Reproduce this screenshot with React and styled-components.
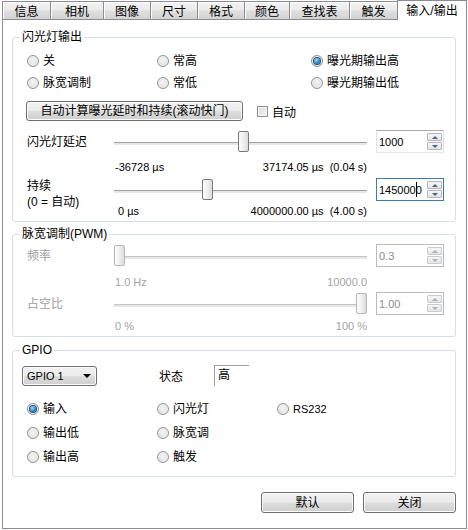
import React from "react";
import styled, { createGlobalStyle } from "styled-components";

const GlobalStyle = createGlobalStyle`
  html, body {
    margin: 0;
    padding: 0;
    background: #fff;
  }
  body {
    font-family: "Liberation Sans", "Noto Sans CJK SC", sans-serif;
    font-size: 12px;
    color: #000;
  }
`;

const tabs = [
  { label: "信息", w: 49 },
  { label: "相机", w: 54 },
  { label: "图像", w: 48 },
  { label: "尺寸", w: 48 },
  { label: "格式", w: 48 },
  { label: "颜色", w: 46 },
  { label: "查找表", w: 61 },
  { label: "触发", w: 49 },
  { label: "输入/输出", w: 70, active: true },
];

const Window = styled.div`
  width: 468px;
  height: 530px;
  padding-left: 2px;
  box-sizing: border-box;
  background: #fff;
`;

const TabStrip = styled.div`
  display: flex;
  align-items: flex-end;
  height: 20px;
  position: relative;
  z-index: 1;
`;

const Tab = styled.div`
  width: ${(p) => p.$w}px;
  height: ${(p) => (p.$active ? 20 : 19)}px;
  margin-left: ${(p) => (p.$first ? 0 : -1)}px;
  box-sizing: border-box;
  border: 1px solid #898c95;
  border-bottom: ${(p) => (p.$active ? "none" : "1px solid #898c95")};
  background: ${(p) =>
    p.$active
      ? "#fff"
      : "linear-gradient(#f3f3f3 0%, #ebebeb 45%, #dedede 55%, #d3d3d3 100%)"};
  box-shadow: ${(p) => (p.$active ? "none" : "inset 1px 1px 0 #fcfcfc")};
  display: flex;
  justify-content: center;
  align-items: center;
  padding-top: ${(p) => (p.$active ? 0 : 3)}px;
  font-size: 12px;
  line-height: 14px;
`;

const Panel = styled.div`
  width: 465px;
  height: 510px;
  margin-top: -1px;
  box-sizing: border-box;
  border: 1px solid #898c95;
  background: #fff;
  display: flex;
  flex-direction: column;
`;

const Group = styled.fieldset`
  margin: ${(p) => p.$top}px 0 0 9px;
  padding: 0;
  width: 444px;
  min-width: 0;
  box-sizing: border-box;
  border: 1px solid #d5dfe5;
  border-radius: 3px;
`;

const Legend = styled.legend`
  margin-left: 7px;
  padding: 0 2px;
  line-height: 14px;
  font-size: 12px;
`;

const GroupBody = styled.div`
  padding: ${(p) => p.$pad};
`;

const RadioGrid = styled.div`
  display: grid;
  grid-template-columns: ${(p) => p.$cols};
  grid-auto-rows: ${(p) => p.$row}px;
  align-items: center;
  padding-left: 14px;
  margin-top: ${(p) => p.$top || 0}px;
`;

const Choice = styled.label`
  display: flex;
  align-items: center;
  gap: 4px;
  line-height: 14px;
`;

const RadioDot = styled.span`
  width: 12px;
  height: 12px;
  box-sizing: border-box;
  border-radius: 50%;
  border: 1px solid #8f9090;
  background: radial-gradient(circle at 50% 45%, #f6f6f6 0%, #e4e4e4 55%, #cfcfcf 100%);
  box-shadow: inset 0 0 0 1px #f4f4f4;
  display: flex;
  align-items: center;
  justify-content: center;
  &::after {
    content: "";
    display: ${(p) => (p.$checked ? "block" : "none")};
    width: 6px;
    height: 6px;
    border-radius: 50%;
    background: radial-gradient(circle at 40% 35%, #9fdcff 0%, #2b86c8 55%, #16496f 100%);
    box-shadow: 0 0 0 1px #1e4f74;
  }
`;

const Radio = ({ checked, children }) => (
  <Choice>
    <RadioDot $checked={checked} />
    <span>{children}</span>
  </Choice>
);

const ActionRow = styled.div`
  display: flex;
  align-items: center;
  margin-top: 7px;
  padding-left: 13px;
`;

const Button = styled.button`
  width: ${(p) => p.$w}px;
  height: ${(p) => p.$h || 21}px;
  box-sizing: border-box;
  border: 1px solid #707070;
  border-radius: 3px;
  background: linear-gradient(#f2f2f2 0%, #ebebeb 48%, #dddddd 52%, #cfcfcf 100%);
  box-shadow: inset 0 0 0 1px #fbfbfb;
  font-family: inherit;
  font-size: 12px;
  color: #000;
  padding: 0;
  line-height: 14px;
`;

const CheckBox = styled.span`
  width: 11px;
  height: 11px;
  box-sizing: border-box;
  border: 1px solid #8f8f8f;
  background: linear-gradient(135deg, #dcdcdc, #f4f4f4);
  box-shadow: inset 0 0 0 1px #f6f6f6;
`;

const CheckLabel = styled.label`
  display: flex;
  align-items: center;
  gap: 4px;
  margin-left: 14px;
`;

const SliderRow = styled.div`
  display: grid;
  grid-template-columns: 78px 253px 68px;
  column-gap: 9px;
  height: 23px;
  padding-left: 14px;
  margin-top: ${(p) => p.$top}px;
`;

const RowLabel = styled.div`
  align-self: ${(p) => (p.$multi ? "start" : "center")};
  line-height: 16px;
  color: ${(p) => (p.$disabled ? "#a0a0a0" : "#000")};
  white-space: nowrap;
`;

const Track = styled.div`
  position: relative;
  height: 23px;
  &::before {
    content: "";
    position: absolute;
    left: 0;
    right: 0;
    top: 12px;
    height: 1px;
    background: ${(p) => (p.$disabled ? "#c4c4c4" : "#a0a0a0")};
    border-bottom: 2px solid #e4e8e9;
  }
`;

const Thumb = styled.div`
  position: absolute;
  top: 1px;
  width: 11px;
  height: 21px;
  box-sizing: border-box;
  border: 1px solid ${(p) => (p.$disabled ? "#b4b7ba" : "#7a7a7a")};
  border-radius: 2px;
  background: linear-gradient(to right, #fdfdfd, #efefef 50%, #dcdcdc);
`;

const Slider = ({ pos, disabled }) => (
  <Track $disabled={disabled}>
    <Thumb $disabled={disabled} style={{ left: pos }} />
  </Track>
);

const SpinWrap = styled.div`
  width: 68px;
  height: 23px;
  box-sizing: border-box;
  border: 1px solid;
  border-color: ${(p) =>
    p.$focus ? "#3d7bad" : p.$disabled ? "#b8bcc0" : "#abadb3 #dbdfe6 #e3e9ef #e2e3ea"};
  background: #fff;
  display: flex;
  align-items: center;
  padding-left: 2px;
  font-size: 12px;
  color: ${(p) => (p.$disabled ? "#8d8d8d" : "#000")};
`;

const SpinText = styled.span`
  display: flex;
  align-items: center;
  line-height: 14px;
`;

const Caret = styled.span`
  display: inline-block;
  width: 1px;
  height: 15px;
  background: #000;
  margin-right: -1px;
`;

const SpinButtons = styled.div`
  margin-left: auto;
  margin-right: 1px;
  align-self: flex-start;
  margin-top: 2px;
  display: flex;
  flex-direction: column;
  gap: 1px;
`;

const SpinButton = styled.div`
  width: 15px;
  height: 8px;
  box-sizing: border-box;
  border: 1px solid ${(p) => (p.$disabled ? "#c9cbcd" : "#b3b6bb")};
  border-radius: 1px;
  background: linear-gradient(#f6f6f6, #e5e5e5);
  display: flex;
  align-items: center;
  justify-content: center;
  &::after {
    content: "";
    border-left: 3px solid transparent;
    border-right: 3px solid transparent;
    ${(p) => (p.$down ? "border-top" : "border-bottom")}: 3px solid
      ${(p) => (p.$disabled ? "#a6aeb8" : "#4d6185")};
  }
`;

const Spin = ({ children, focus, disabled }) => (
  <SpinWrap $focus={focus} $disabled={disabled}>
    <SpinText>{children}</SpinText>
    <SpinButtons>
      <SpinButton $disabled={disabled} />
      <SpinButton $down $disabled={disabled} />
    </SpinButtons>
  </SpinWrap>
);

const ScaleRow = styled.div`
  display: flex;
  justify-content: space-between;
  width: 252px;
  margin-left: 102px;
  margin-top: ${(p) => p.$top}px;
  height: 14px;
  line-height: 14px;
  font-size: 11px;
  color: ${(p) => (p.$disabled ? "#a3a3a3" : "#000")};
  white-space: pre;
`;

const GpioTop = styled.div`
  display: flex;
  align-items: center;
  margin-top: 8px;
  padding-left: 9px;
`;

const Dropdown = styled.div`
  width: 75px;
  height: 20px;
  box-sizing: border-box;
  border: 1px solid #707070;
  border-radius: 3px;
  background: linear-gradient(#f2f2f2 0%, #ebebeb 48%, #dddddd 52%, #cfcfcf 100%);
  box-shadow: inset 0 0 0 1px #fbfbfb;
  display: flex;
  align-items: center;
  justify-content: space-between;
  padding: 0 5px 0 4px;
  font-size: 11px;
  &::after {
    content: "";
    border-left: 4px solid transparent;
    border-right: 4px solid transparent;
    border-top: 4px solid #000;
  }
`;

const StateLabel = styled.span`
  margin-left: 62px;
`;

const StateValue = styled.div`
  width: 35px;
  height: 21px;
  margin-left: 31px;
  box-sizing: border-box;
  border-top: 1px solid #a0a0a0;
  border-left: 1px solid #a0a0a0;
  padding: 2px 0 0 3px;
  line-height: 14px;
`;

const Footer = styled.div`
  display: flex;
  justify-content: flex-end;
  gap: 9px;
  width: 444px;
  margin: 15px 0 0 9px;
`;

const Latin = styled.span`
  font-size: 11px;
`;

export default function App() {
  return (
    <>
      <GlobalStyle />
      <Window>
        <TabStrip>
          {tabs.map((t, i) => (
            <Tab key={t.label} $w={t.w} $active={t.active} $first={i === 0}>
              {t.label}
            </Tab>
          ))}
        </TabStrip>
        <Panel>
          <Group $top={10}>
            <Legend>闪光灯输出</Legend>
            <GroupBody $pad="6px 0 3px 0">
              <RadioGrid $cols="130px 154px 1fr" $row={22}>
                <Radio>关</Radio>
                <Radio>常高</Radio>
                <Radio checked>曝光期输出高</Radio>
                <Radio>脉宽调制</Radio>
                <Radio>常低</Radio>
                <Radio>曝光期输出低</Radio>
              </RadioGrid>
              <ActionRow>
                <Button $w={217} $h={20}>
                  自动计算曝光延时和持续(滚动快门)
                </Button>
                <CheckLabel>
                  <CheckBox />
                  <span>自动</span>
                </CheckLabel>
              </ActionRow>
              <SliderRow $top={9}>
                <RowLabel>闪光灯延迟</RowLabel>
                <Slider pos={124} />
                <Spin>
                  <Latin>1000</Latin>
                </Spin>
              </SliderRow>
              <ScaleRow $top={7}>
                <span>-36728 µs</span>
                <span>37174.05 µs  (0.04 s)</span>
              </ScaleRow>
              <SliderRow $top={4}>
                <RowLabel $multi>
                  持续
                  <br />
                  (0 = 自动)
                </RowLabel>
                <Slider pos={88} />
                <Spin focus>
                  <Latin>145000</Latin>
                  <Caret />
                  <Latin>0</Latin>
                </Spin>
              </SliderRow>
              <ScaleRow $top={3}>
                <span> 0 µs</span>
                <span>4000000.00 µs  (4.00 s)</span>
              </ScaleRow>
            </GroupBody>
          </Group>

          <Group $top={5}>
            <Legend>脉宽调制(PWM)</Legend>
            <GroupBody $pad="3px 0 3px 0">
              <SliderRow $top={0}>
                <RowLabel $disabled>频率</RowLabel>
                <Slider pos={0} disabled />
                <Spin disabled>
                  <Latin>0.3</Latin>
                </Spin>
              </SliderRow>
              <ScaleRow $top={8} $disabled>
                <span>1.0 Hz</span>
                <span>10000.0</span>
              </ScaleRow>
              <SliderRow $top={3}>
                <RowLabel $disabled>占空比</RowLabel>
                <Slider pos={242} disabled />
                <Spin disabled>
                  <Latin>1.00</Latin>
                </Spin>
              </SliderRow>
              <ScaleRow $top={4} $disabled>
                <span>0 %</span>
                <span>100 %</span>
              </ScaleRow>
            </GroupBody>
          </Group>

          <Group $top={6}>
            <Legend>GPIO</Legend>
            <GroupBody $pad="0 0 7px 0">
              <GpioTop>
                <Dropdown>GPIO 1</Dropdown>
                <StateLabel>状态</StateLabel>
                <StateValue>高</StateValue>
              </GpioTop>
              <RadioGrid $cols="130px 120px 1fr" $row={24} $top={11}>
                <Radio checked>输入</Radio>
                <Radio>闪光灯</Radio>
                <Radio>
                  <Latin>RS232</Latin>
                </Radio>
                <Radio>输出低</Radio>
                <Radio>脉宽调</Radio>
                <span />
                <Radio>输出高</Radio>
                <Radio>触发</Radio>
              </RadioGrid>
            </GroupBody>
          </Group>

          <Footer>
            <Button $w={93}>默认</Button>
            <Button $w={93}>关闭</Button>
          </Footer>
        </Panel>
      </Window>
    </>
  );
}
